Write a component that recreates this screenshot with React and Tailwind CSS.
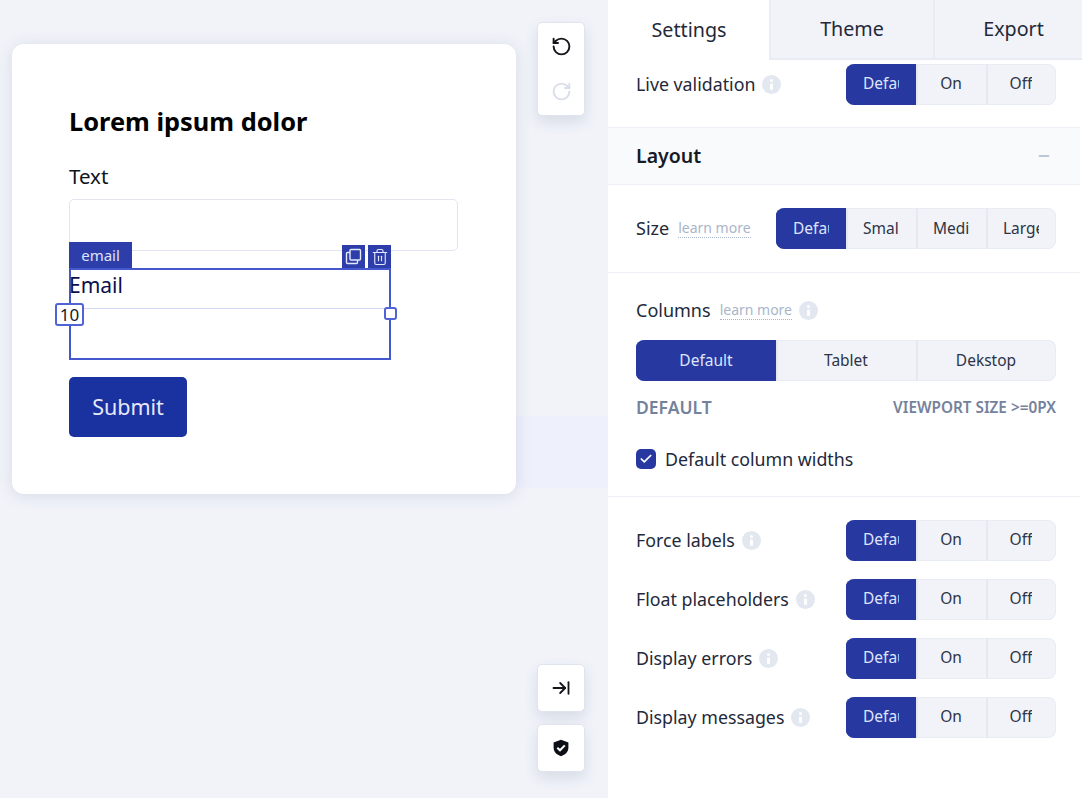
import React from 'react';
import { RotateCcw, RotateCw, Trash2, Check, Minus, ArrowRightToLine } from 'lucide-react';

const FONT = "font-['Noto_Sans','Open_Sans',sans-serif]";

const Info = () => (
  <span className="ml-[7px] inline-flex h-[19px] w-[19px] shrink-0 items-center justify-center rounded-full bg-[#e2e7f0]">
    <svg width="3" height="11" viewBox="0 0 3 11"><rect x="0" y="0" width="3" height="3" rx="1.5" fill="#fff" /><rect x="0" y="4.5" width="3" height="6.5" rx="1" fill="#fff" /></svg>
  </span>
);

const Learn = () => (
  <span className="ml-[9px] border-b border-dotted border-[#a9b5ca] text-[14px] leading-[18px] text-[#a9b5ca]">learn more</span>
);

const CopyIcon = () => (
  <svg width="17" height="17" viewBox="0 0 17 17" fill="none" stroke="#e4e8fb" strokeWidth="1.4">
    <rect x="5" y="1.5" width="10.5" height="10.5" rx="1" />
    <path d="M5 4.5H2.5a1 1 0 0 0-1 1v9a1 1 0 0 0 1 1h9a1 1 0 0 0 1-1V12" />
  </svg>
);

const ShieldIcon = () => (
  <svg width="18" height="18" viewBox="0 0 18 18">
    <path d="M9 .8 16.4 3.4v5.2c0 4.2-3 7.3-7.4 8.6C4.6 15.9 1.600 12.800 1.600 8.600V3.400Z" fill="#0d0f16" />
    <path d="M5.300 8.700 8 11.300 12.800 6.400" fill="none" stroke="#fff" strokeWidth="2" />
  </svg>
);

// Segmented control; the first item is always the active one.
function Segments({ items, width }) {
  return (
    <div className="flex h-[41px] overflow-hidden rounded-[8px] bg-[#f1f3f9] text-[15.5px] text-[#2d3446] shadow-[inset_0_0_0_1px_#e8ecf4]" style={{ width }}>
      {items.map((item, i) => (
        <div
          key={item}
          className={`flex min-w-0 flex-1 items-center justify-center border-l-2 pl-[15px] pr-[17px] ${i === 0 ? 'border-[#2738a0] bg-[#2738a0] text-[#dfe4fb]' : 'border-[#e6e9f1]'}`}
        >
          <span className="overflow-hidden whitespace-nowrap">{item}</span>
        </div>
      ))}
    </div>
  );
}

function OptionRow({ label }) {
  return (
    <div className="flex h-[42px] items-center justify-between">
      <div className="flex items-center text-[17.8px] text-[#23293a]">{label}<Info /></div>
      <Segments items={['Default', 'On', 'Off']} width={210} />
    </div>
  );
}

function ToolButton({ children, className = '' }) {
  return (
    <div className={`flex w-[48px] flex-col items-center rounded-[5px] border-[1.5px] border-[#e0e4ef] bg-white shadow-[0_6px_14px_rgba(60,75,120,0.14)] ${className}`}>
      {children}
    </div>
  );
}

export default function App() {
  return (
    <div className={`${FONT} flex h-[798px] w-[1082px] overflow-hidden bg-[#f1f3f9]`}>
      {/* canvas */}
      <div className="relative flex w-[608px] shrink-0">
        <div className="absolute left-[516px] top-[416px] h-[72px] w-[92px] bg-[#eef0fb]" />
        <div className="relative ml-[12px] mt-[44px] h-[450px] w-[504px] shrink-0 rounded-[12px] bg-white px-[57px] pt-[57px] shadow-[0_2px_16px_rgba(60,75,120,0.14)]">
          <h1 className="text-[25.4px] font-bold leading-[40px] text-black">Lorem ipsum dolor</h1>
          <div className="mt-[21px] text-[20.5px] leading-[28px] text-[#10131c]">Text</div>
          <div className="mt-[9px] h-[52px] w-[389px] rounded-[5px] border-[1.5px] border-[#e2e5f1] bg-white" />

          <div className="relative mt-[17px] h-[92px] w-[322px] border-2 border-[#4557cc]">
            <div className="absolute -top-[28px] left-[-2px] flex h-[26px] w-[63px] items-center justify-center bg-[#2d3eaa] text-[15px] text-[#dfe4fb]">email</div>
            <div className="absolute -top-[25px] right-[-2px] flex gap-[3px]">
              <div className="flex h-[23px] w-[23px] items-center justify-center bg-[#2d3eaa]"><CopyIcon /></div>
              <div className="flex h-[23px] w-[23px] items-center justify-center bg-[#2d3eaa]"><Trash2 size={18} strokeWidth={1.5} color="#e4e8fb" /></div>
            </div>
            <div className="-ml-[2px] -mt-[1px] text-[21px] leading-[33px] text-[#0b0f4a]">Email</div>
            <div className="mt-[6px] h-[50px] border-t-[1.5px] border-[#d3d9f3]" />
            <div className="absolute left-[-16px] top-[33px] flex h-[23px] w-[29px] items-center justify-center rounded-[3px] border-2 border-[#4f62d6] bg-white text-[17px] text-[#15192a]">10</div>
            <div className="absolute right-[-8px] top-[37px] h-[13px] w-[13px] rounded-[3px] border-2 border-[#4f62d6] bg-white" />
          </div>

          <button type="button" className="mt-[17px] flex h-[60px] w-[118px] items-center justify-center rounded-[5px] bg-[#1a31a0] text-[21.5px] text-[#e6e9fb]">Submit</button>
        </div>

        <div className="relative ml-[21px] flex flex-col pb-[26px] pt-[22px]">
          <ToolButton className="h-[94px] justify-center gap-[24px]">
            <RotateCcw size={21} strokeWidth={2.2} color="#14161c" />
            <RotateCw size={21} strokeWidth={2.2} color="#d9dee8" />
          </ToolButton>
          <ToolButton className="mt-auto h-[48px] justify-center">
            <ArrowRightToLine size={20} strokeWidth={2.2} color="#14161c" />
          </ToolButton>
          <ToolButton className="mt-[12px] h-[48px] justify-center">
            <ShieldIcon />
          </ToolButton>
        </div>
      </div>

      {/* settings panel */}
      <div className="w-[474px] shrink-0 bg-white">
        <div className="flex h-[60px] text-[19.7px] text-[#23293a]">
          <div className="flex w-[161px] items-center justify-center pl-[1px]">Settings</div>
          <div className="flex w-[164px] items-center justify-center border-b-2 border-l-2 border-[#e9ecf4] bg-[#f1f3f9]">Theme</div>
          <div className="flex flex-1 items-center justify-center border-b-2 border-l-2 border-[#e9ecf4] bg-[#f1f3f9] pl-[10px]">Export</div>
        </div>

        <div className="w-[472px]">
          <div className="h-[68px] border-b border-[#eceff5] pl-[28px] pr-[24px] pt-[3px]">
            <OptionRow label="Live validation" />
          </div>
          <div className="flex h-[57px] items-center justify-between border-b border-[#eceff5] bg-[#f9fafc] pl-[28px] pr-[28px]">
            <span className="text-[19.5px] font-semibold text-[#171b27]">Layout</span>
            <Minus size={16} strokeWidth={2} color="#a9b5ca" />
          </div>
          <div className="flex h-[88px] items-center justify-between border-b border-[#eceff5] pl-[28px] pr-[24px]">
            <div className="flex items-center text-[18px] text-[#23293a]">Size<Learn /></div>
            <Segments items={['Default', 'Small', 'Medium', 'Large']} width={280} />
          </div>
          <div className="h-[224px] border-b border-[#eceff5] pl-[28px] pr-[24px] pt-[23px]">
            <div className="flex h-[28px] items-center text-[18px] text-[#23293a]">Columns<Learn /><Info /></div>
            <div className="mt-[16px]"><Segments items={['Default', 'Tablet', 'Dekstop']} width={420} /></div>
            <div className="mt-[14px] flex items-center justify-between font-semibold text-[#74829c]">
              <span className="text-[17.5px] leading-[24px]">DEFAULT</span>
              <span className="text-[15.3px] leading-[24px]">VIEWPORT SIZE &gt;=0PX</span>
            </div>
            <div className="mt-[27px] flex items-center text-[17.8px] text-[#23293a]">
              <span className="mr-[9px] flex h-[20px] w-[20px] items-center justify-center rounded-[5px] bg-[#2738a0]"><Check size={14} strokeWidth={3} color="#fff" /></span>
              Default column widths
            </div>
          </div>
          <div className="flex flex-col gap-[17px] pl-[28px] pr-[24px] pt-[22px]">
            <OptionRow label="Force labels" />
            <OptionRow label="Float placeholders" />
            <OptionRow label="Display errors" />
            <OptionRow label="Display messages" />
          </div>
        </div>
      </div>
    </div>
  );
}
